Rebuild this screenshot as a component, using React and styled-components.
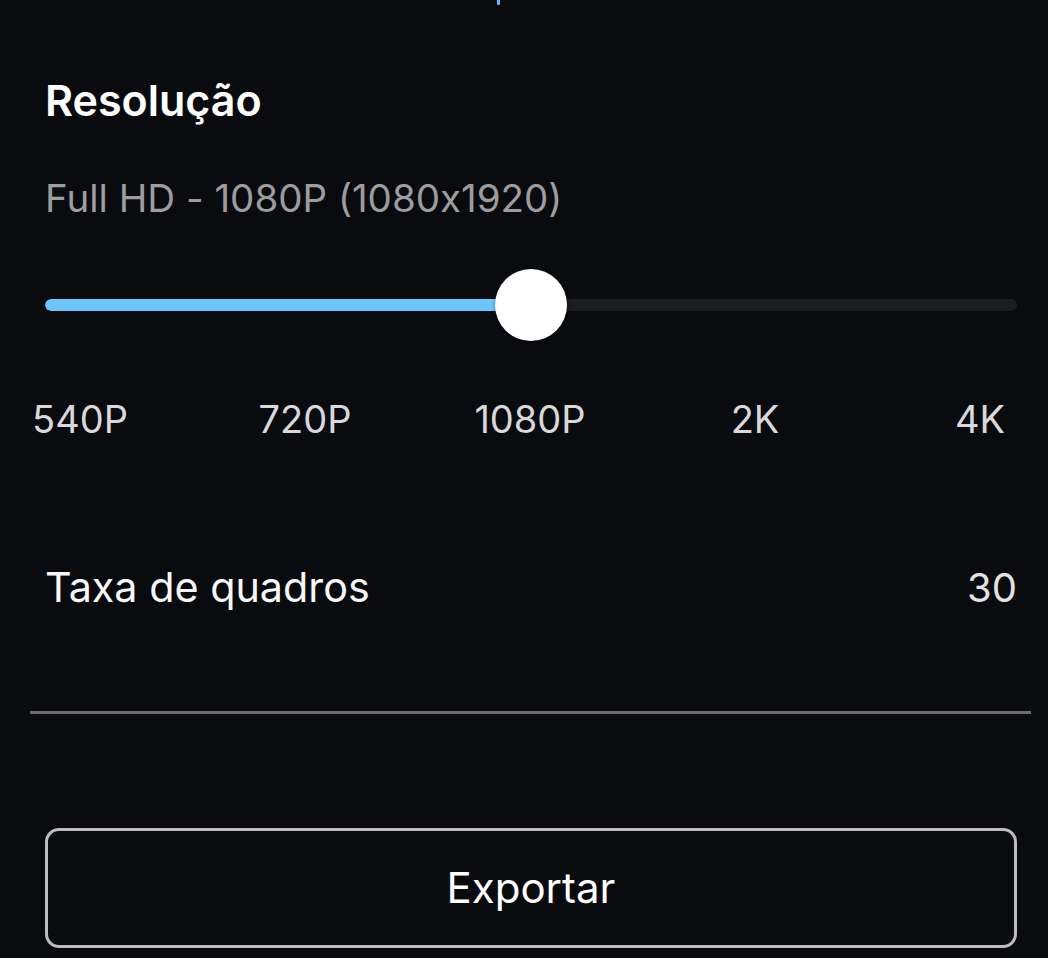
import React from "react";
import styled, { createGlobalStyle } from "styled-components";

const Global = createGlobalStyle`
  html, body {
    margin: 0;
    padding: 0;
    background: #0a0b0f;
    overflow: hidden;
  }
  body {
    font-family: Inter, "Noto Sans", "Liberation Sans", sans-serif;
    font-feature-settings: "calt" 0;
    -webkit-font-smoothing: antialiased;
  }
`;

const Page = styled.div`
  width: 1048px;
  height: 958px;
  box-sizing: border-box;
  padding: 0 31px 0 45px;
  display: flex;
  flex-direction: column;
  background: #0a0b0f;
  overflow: hidden;
`;

const Tick = styled.div`
  width: 3px;
  height: 5px;
  margin-left: 452px;
  background: #5fb8ee;
  border-radius: 0 0 1px 1px;
`;

const Title = styled.div`
  margin-top: 70px;
  font-size: 43px;
  line-height: 50px;
  font-weight: 600;
  color: #ffffff;
`;

const Subtitle = styled.div`
  margin-top: 50px;
  font-size: 38.5px;
  line-height: 46px;
  color: #9d9d9f;
  font-feature-settings: "calt" 0;
`;

const Slider = styled.div`
  position: relative;
  margin-top: 48px;
  height: 72px;
  display: flex;
  align-items: center;
`;

const Track = styled.div`
  flex: 1;
  height: 12px;
  border-radius: 6px;
  background: #1c1d21;
  overflow: hidden;
  display: flex;
`;

const Fill = styled.div`
  height: 100%;
  background: #6cc6fd;
  border-radius: 6px;
`;

const Thumb = styled.div`
  position: absolute;
  top: 0;
  width: 72px;
  height: 72px;
  margin-left: -36px;
  border-radius: 50%;
  background: #ffffff;
  box-shadow: 0 1px 4px rgba(0, 0, 0, 0.4);
`;

const Labels = styled.div`
  margin-top: 55px;
  margin-left: -25px;
  width: 1020px;
  display: flex;
  justify-content: space-between;
`;

const Label = styled.div`
  width: 120px;
  text-align: center;
  font-size: 38px;
  line-height: 46px;
  color: #d9d9db;
`;

const Row = styled.div`
  margin-top: 120px;
  display: flex;
  justify-content: space-between;
  align-items: baseline;
  line-height: 50px;
`;

const RowLabel = styled.div`
  font-size: 41.3px;
  color: #f7f7f7;
`;

const RowValue = styled.div`
  font-size: 40px;
  color: #e2e2e4;
`;

const Divider = styled.div`
  margin: 98px -14px 0 -15px;
  height: 3px;
  background: #6c6c6e;
`;

const Button = styled.button`
  margin-top: 114px;
  height: 120px;
  width: 100%;
  box-sizing: border-box;
  border: 3px solid #bdbdbf;
  border-radius: 14px;
  background: transparent;
  color: #ffffff;
  font-family: inherit;
  font-size: 42px;
  line-height: 50px;
  cursor: pointer;
`;

const options = ["540P", "720P", "1080P", "2K", "4K"];

export default function App() {
  const value = 2;
  const pct = (value / (options.length - 1)) * 100;
  return (
    <>
      <Global />
      <Page>
        <Tick />
        <Title>Resolução</Title>
        <Subtitle>Full HD - 1080P (1080x1920)</Subtitle>
        <Slider>
          <Track>
            <Fill style={{ width: `${pct}%` }} />
          </Track>
          <Thumb style={{ left: `${pct}%` }} />
        </Slider>
        <Labels>
          {options.map((o) => (
            <Label key={o}>{o}</Label>
          ))}
        </Labels>
        <Row>
          <RowLabel>Taxa de quadros</RowLabel>
          <RowValue>30</RowValue>
        </Row>
        <Divider />
        <Button>Exportar</Button>
      </Page>
    </>
  );
}
